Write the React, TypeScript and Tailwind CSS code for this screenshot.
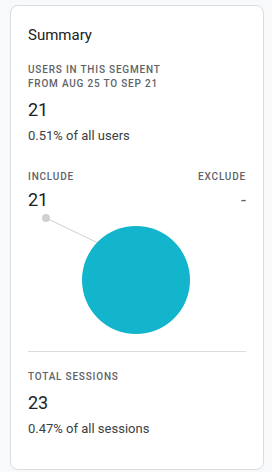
export default function App() {
  return (
    <div className="min-h-screen bg-[#f8f9fa] pt-[5px] pl-[10px] pr-[8px] pb-[8px]" style={{ fontFamily: 'Roboto, "Liberation Sans", sans-serif' }}>
      <div className="bg-white border border-[#dadce0] rounded-lg px-[17px] pt-[18px] pb-[30px]">
        <h2 className="text-[15px] leading-[22px] text-[#202124]">Summary</h2>

        <div className="mt-[17px] text-[10px] leading-[14px] tracking-[0.08em] font-medium text-[#5f6368] uppercase">
          <div>Users in this segment</div>
          <div>from Aug 25 to Sep 21</div>
        </div>
        <div className="mt-[5px] text-[18px] leading-[28px] text-[#202124]">21</div>
        <div className="mt-[2px] text-[13px] leading-[20px] text-[#3c4043]">0.51% of all users</div>

        <div className="mt-[24px] flex justify-between text-[10px] leading-[14px] tracking-[0.08em] font-medium text-[#5f6368] uppercase">
          <span>Include</span>
          <span>Exclude</span>
        </div>
        <div className="mt-[4px] flex justify-between text-[18px] leading-[24px] text-[#202124]">
          <span>21</span>
          <span className="text-[#5f6368]">-</span>
        </div>

        {/* bubble chart */}
        <svg width="218" height="128" viewBox="0 0 218 128" className="block">
          <line x1="18" y1="6" x2="70" y2="31" stroke="#d0d0d0" strokeWidth="1" />
          <circle cx="18" cy="6" r="4" fill="#d0d0d0" />
          <circle cx="108" cy="68" r="54" fill="#12b5cb" />
        </svg>

        <div className="mt-[11px] border-t border-[#dadce0]" />

        <div className="mt-[18px] text-[10px] leading-[14px] tracking-[0.08em] font-medium text-[#5f6368] uppercase">
          Total sessions
        </div>
        <div className="mt-[5px] text-[18px] leading-[28px] text-[#202124]">23</div>
        <div className="mt-[2px] text-[13px] leading-[20px] text-[#3c4043]">0.47% of all sessions</div>
      </div>
    </div>
  );
}
